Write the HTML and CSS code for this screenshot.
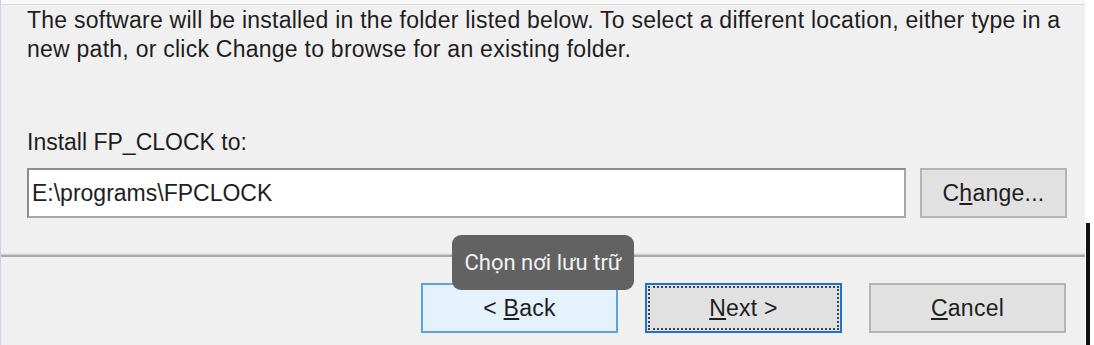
FILE: index.html
```html
<!DOCTYPE html>
<html>
<head>
<meta charset="utf-8">
<link rel="stylesheet" href="styles.css">
</head>
<body>
<div class="screen">
  <div class="dialog">
    <div class="topband"></div>
    <div class="content">
      <p class="intro">The software will be installed in the folder listed below. To select a different location, either type in a<br>new path, or click Change to browse for an existing folder.</p>
      <div class="label">Install FP_CLOCK to:</div>
      <div class="pathrow">
        <div class="pathbox">E:\programs\FPCLOCK</div>
        <div class="btn"><span>C<u>h</u>ange...</span></div>
      </div>
    </div>
    <div class="separator"></div>
    <div class="buttons">
      <div class="btn hover"><span>&lt; <u>B</u>ack</span></div>
      <div class="btn default"><div class="focus"><span><u>N</u>ext &gt;</span></div></div>
      <div class="btn"><span><u>C</u>ancel</span></div>
    </div>
    <div class="tooltip">Chọn nơi lưu trữ</div>
  </div>
  <div class="edge"><div class="edgeline"></div></div>
</div>
</body>
</html>
```
FILE: styles.css
```css
html, body {
  margin: 0;
  padding: 0;
  background: #ffffff;
}
.screen {
  display: flex;
  width: 1094px;
  height: 345px;
  overflow: hidden;
  font-family: "Liberation Sans", Arial, sans-serif;
  font-size: 23px;
  letter-spacing: 0.25px;
  color: #1e1e1e;
}
.dialog {
  position: relative;
  width: 1085px;
  height: 345px;
  box-sizing: border-box;
  background: #f0f0f0;
  border-left: 1px solid #c8d2e4;
  display: flex;
  flex-direction: column;
}
.topband {
  height: 4px;
  background: #f8f8f8;
  border-bottom: 1px solid #d9d9d9;
}
.content {
  padding-left: 26px;
  padding-right: 18px;
}
.intro {
  margin: 1px 0 0;
  line-height: 29px;
  white-space: nowrap;
}
.label {
  margin-top: 64px;
  line-height: 28px;
  letter-spacing: 0;
}
.pathrow {
  display: flex;
  gap: 14px;
  margin-top: 12px;
}
.pathbox {
  width: 879px;
  height: 50px;
  box-sizing: border-box;
  background: #fff;
  border: 2px solid #8c8c8c;
  border-right-color: #a8a8a8;
  border-bottom-color: #a8a8a8;
  padding: 9px 0 0 3px;
  line-height: 28px;
  letter-spacing: 0;
}
.btn {
  width: 147px;
  height: 50px;
  box-sizing: border-box;
  background: #e1e1e1;
  border: 2px solid #b4b4b4;
  display: flex;
  align-items: center;
  justify-content: center;
  white-space: pre;
}
.separator {
  margin-top: 35px;
  height: 1px;
  background: #cfcfcf;
  border-top: 1px solid #e4e4e4;
  border-bottom: 2px solid #a9a9a9;
}
.buttons {
  display: flex;
  justify-content: flex-end;
  gap: 27px;
  margin-top: 26px;
  padding-right: 19px;
}
.buttons .btn {
  width: 197px;
}
.btn.hover {
  background: #e5f1fb;
  border-color: #5ba3e0;
}
.btn.default {
  border-color: #1a73d0;
  padding: 1px;
  align-items: stretch;
  justify-content: stretch;
}
.focus {
  flex: 1;
  display: flex;
  align-items: center;
  justify-content: center;
  border: 2px dotted #444;
}
.tooltip {
  position: absolute;
  left: 451px;
  top: 235px;
  width: 182px;
  height: 55px;
  box-sizing: border-box;
  border-radius: 9px;
  background: #626262;
  color: #f2f2f2;
  font-family: Roboto, "Noto Sans", sans-serif;
  font-size: 22px;
  letter-spacing: 0;
  display: flex;
  align-items: center;
  justify-content: center;
}
.edge {
  width: 9px;
  background: #fff;
  display: flex;
  flex-direction: column;
}
.edgeline {
  margin-top: 223px;
  margin-left: 1px;
  width: 4px;
  flex: 1;
  background: #111;
}
```
